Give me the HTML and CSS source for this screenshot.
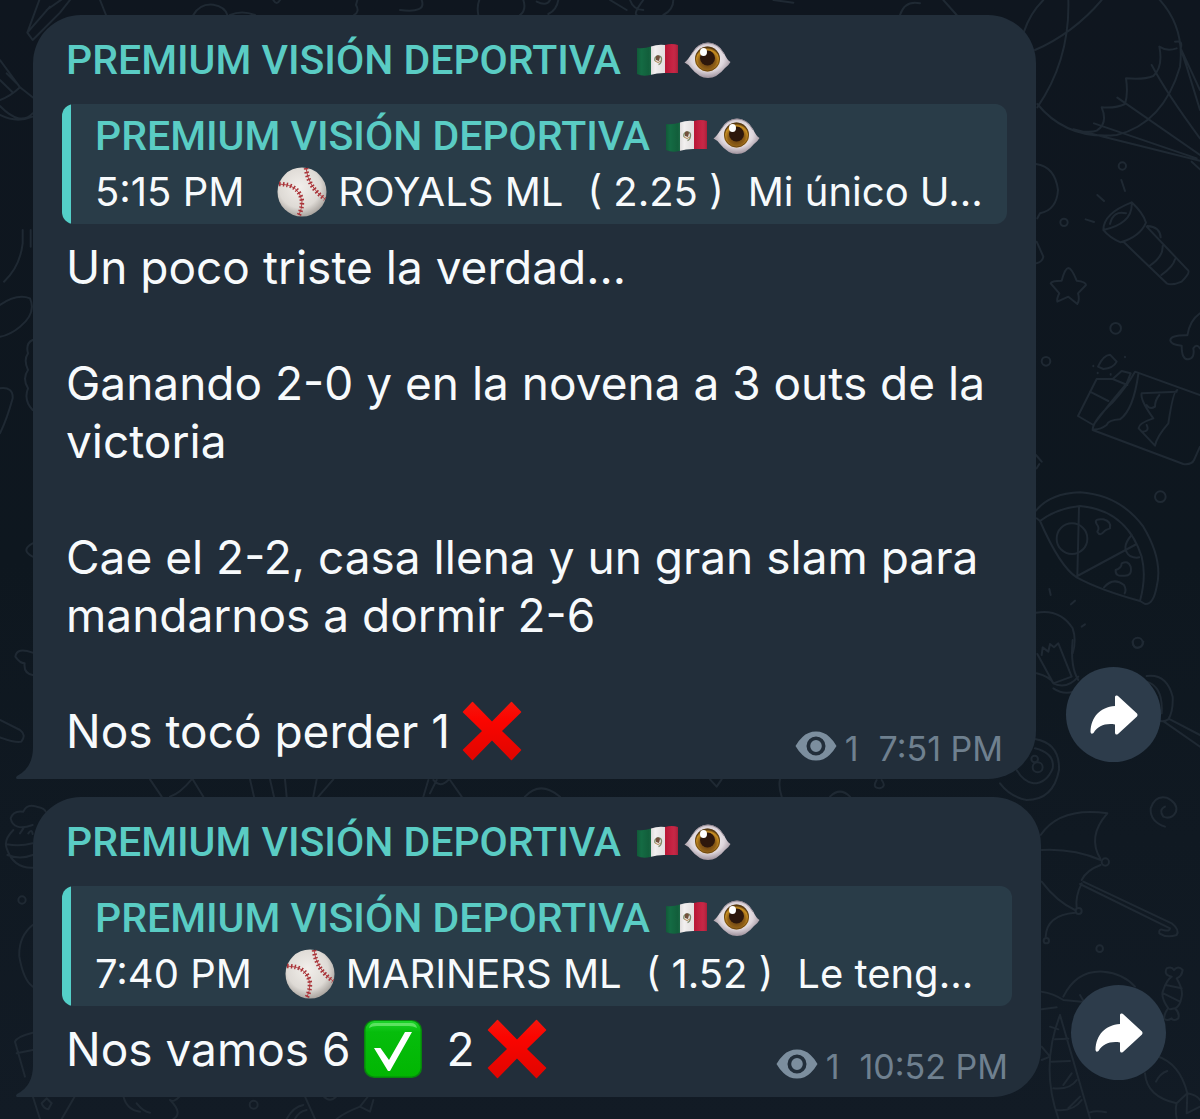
FILE: index.html
```html
<!DOCTYPE html>
<html lang="es">
<head>
<meta charset="utf-8">
<meta name="viewport" content="width=device-width, initial-scale=1">
<title>Premium Visión Deportiva</title>
<link rel="stylesheet" href="styles.css">
</head>
<body>
<svg class="defs" aria-hidden="true">
  <defs>
    <linearGradient id="flag-shade" x1="0" x2="1" y1="0" y2="0">
      <stop offset="0" stop-color="#000" stop-opacity=".2"/><stop offset=".12" stop-color="#000" stop-opacity="0"/>
      <stop offset=".3" stop-color="#000" stop-opacity=".12"/><stop offset=".45" stop-color="#fff" stop-opacity=".1"/>
      <stop offset=".7" stop-color="#000" stop-opacity=".06"/><stop offset=".85" stop-color="#fff" stop-opacity=".05"/><stop offset="1" stop-color="#000" stop-opacity=".2"/>
    </linearGradient>
    <radialGradient id="eye-white" cx=".5" cy=".45" r=".6">
      <stop offset="0" stop-color="#fff"/><stop offset=".6" stop-color="#ded6dc"/><stop offset="1" stop-color="#8d7f8b"/>
    </radialGradient>
    <radialGradient id="eye-iris" cx=".5" cy=".6" r=".55">
      <stop offset="0" stop-color="#5a3411"/><stop offset=".6" stop-color="#8f5f17"/><stop offset=".85" stop-color="#c98f22"/><stop offset="1" stop-color="#5b3c12"/>
    </radialGradient>
    <radialGradient id="ball-skin" cx=".45" cy=".4" r=".6">
      <stop offset="0" stop-color="#f2efeb"/><stop offset=".7" stop-color="#dedad5"/><stop offset="1" stop-color="#aba6a1"/>
    </radialGradient>
    <linearGradient id="cross-red" x1="0" x2="0" y1="0" y2="1">
      <stop offset="0" stop-color="#f5160c"/><stop offset=".3" stop-color="#fb0500"/><stop offset="1" stop-color="#e00500"/>
    </linearGradient>
    <linearGradient id="check-green" x1="0" x2="0" y1="0" y2="1">
      <stop offset="0" stop-color="#1cd42a"/><stop offset=".2" stop-color="#06bd0c"/><stop offset="1" stop-color="#02b602"/>
    </linearGradient>
    <symbol id="flag" viewBox="0 0 43 34">
      <clipPath id="flag-cut"><path d="M1 5Q8 6 15 3.500T29 2Q36 0 42 2V30Q35 30 28 30T14 32Q7 34 1 31Z"/></clipPath>
      <g clip-path="url(#flag-cut)">
        <path fill="#146b43" d="M0 0h15v34H0z"/><path fill="#f1eeee" d="M15 0h14v34H15z"/><path fill="#c5193a" d="M29 0h14v34H29z"/>
        <path fill="url(#flag-shade)" d="M0 0h43v34H0z"/>
      </g>
      <path d="M19 18q-1-4 3-5q4 0 3.500 4q-.5 4-3 4.500" fill="none" stroke="#7c8a68" stroke-width="1.300"/>
      <path d="M20 13q3-2 4 1l-1 4-3-1z" fill="#73503c"/><path d="M19 18q3 3 6 0" fill="none" stroke="#b28a55"/>
    </symbol>
    <symbol id="eye" viewBox="0 0 47 38">
      <path fill="url(#eye-white)" d="M.5 21.500Q4 19 8 12Q14 1.500 24 1.500T40 12Q43 19 46.500 21Q45 24 41 27Q33 37 24 37T7 27Q4 23 .5 21.500Z"/>
      <path fill="none" stroke="#776a76" stroke-opacity=".6" d="M7 14Q14 2 24 2T40 13"/>
      <circle cx="23.500" cy="18" r="12.500" fill="url(#eye-iris)"/>
      <circle cx="23.500" cy="18" r="12" fill="none" stroke="#54360f" stroke-opacity=".7"/>
      <circle cx="23.500" cy="17" r="7.500" fill="#2d170c"/>
      <ellipse cx="19.500" cy="11" rx="3.500" ry="4" fill="#fff"/>
    </symbol>
    <symbol id="ball" viewBox="0 0 50 50">
      <circle cx="25" cy="25" r="24.500" fill="url(#ball-skin)"/>
      <g fill="none" stroke="#b6484a">
        <path stroke-width="1" d="M2 17Q22 17 25 34Q25 42 22 48M29 1Q31 20 48 32"/>
        <path stroke-width="4.500" stroke-dasharray="1.500 2.200" stroke="#a93339" d="M2 17Q22 17 25 34Q25 42 22 48M29 1Q31 20 48 32"/>
      </g>
    </symbol>
    <symbol id="cross" viewBox="0 0 60 60">
      <path fill="url(#cross-red)" d="M1 10.500L10 1Q10.500.5 11 1L30 20.500L49 1Q49.500.5 50 1L59 10.500Q59.500 11 59 11.500L40 30L59 48.500Q59.500 49 59 49.500L50 59Q49.500 59.500 49 59L30 39.500L11 59Q10.500 59.500 10 59L1 49.500Q.5 49 1 48.500L20 30L1 11.500Q.5 11 1 10.500Z"/>
    </symbol>
    <symbol id="check" viewBox="0 0 60 60">
      <rect x="1" y="1" width="58" height="58" rx="10" fill="#07870c"/>
      <rect x="2.500" y="2" width="55" height="55.500" rx="9" fill="url(#check-green)"/>
      <path d="M6 9Q7 4 12 4H48Q53 4 54 9Q50 7 46 7H14Q9 7 6 9Z" fill="#8cf08c" fill-opacity=".6"/>
      <path fill="#fff" d="M11 29H17.500L26 41L42 13H49L27 52H25Z"/>
    </symbol>
    <symbol id="views" viewBox="0 0 42 30">
      <path fill-rule="evenodd" d="M.5 15Q4 9 7.500 6Q13 .5 21 .5T34.500 6Q38 9 41.500 15Q38 21 34.500 24Q29 29.500 21 29.500T7.500 24Q4 21 .5 15ZM21 5.500A9.500 9.500 0 1 0 21 24.500A9.500 9.500 0 1 0 21 5.500ZM21 9A5.800 6 0 1 1 21 21A5.800 6 0 1 1 21 9Z"/>
    </symbol>
    <symbol id="forward" viewBox="0 0 48 40">
      <path d="M25 2Q25 0 27 .5L28 1L47 18.500Q48 20 47 21.500L28 39Q25.500 40.500 25 38V29.500C15 28 8 31 3.500 38Q1 40 .5 37C1 22 10 12 25 11Z"/>
    </symbol>
    <symbol id="tail" viewBox="0 0 34 40">
      <path d="M17 0H34V40H1Q-1 39 1 37Q17 29 17 8Z"/>
    </symbol>
  </defs>
</svg>

<svg class="wallpaper" aria-hidden="true" width="1200" height="1119" viewBox="0 0 1200 1119">
  <g fill="none" stroke-width="6" stroke-linecap="round" stroke-linejoin="round">
    <g transform="scale(.33333)">
      <path d="M118 0L82 98L98 120L180 38L210 0M140 30L225 -30M300 0L318 45M82 98L150 20"/>
      <path d="M0 180L60 262L98 292M0 300Q30 290 60 262M0 318Q60 380 98 340M20 220L50 250M0 345Q50 370 98 350M0 240L36 275"/>
      <path d="M68 690V730Q60 800 12 845M92 690V740M0 915Q50 880 90 895Q110 940 60 980Q30 1005 0 1010M98 1020Q76 1030 84 1060Q70 1080 84 1110Q66 1135 84 1165Q70 1200 98 1230M0 1165Q40 1160 38 1195Q20 1260 0 1300M98 1630Q60 1650 98 1670M98 1958Q50 1940 46 1970Q60 1990 74 1990Q70 2020 98 2025M0 2160L60 2190Q80 2205 64 2225Q50 2230 0 2212"/>
      <path d="M580 45Q600 10 640 14Q675 20 682 45M690 45Q725 30 765 45M820 0Q830 18 840 0M1062 45Q1080 35 1068 15L1072 0M1200 30Q1280 40 1265 0M1435 45Q1430 20 1438 0M1570 0Q1580 30 1560 45M1610 5Q1640 20 1650 0M1675 0Q1670 30 1645 42M1830 0L1880 30M1890 0Q1900 30 1930 30M1930 0Q1900 40 1910 45M2020 0Q2020 30 1990 45M2320 0L2380 8M2700 45Q2715 0 2760 10M2830 0L2870 45"/>
    </g>
    <g transform="translate(1000 0) scale(.33333)">
      <path d="M72 95Q90 40 130 0M205 0Q210 180 112 322M305 0Q220 100 105 150M112 312Q200 420 350 405Q490 370 540 200Q555 80 475 -5M525 125Q550 120 542 145L600 270M542 145L560 200L600 330M478 140Q500 155 530 145M478 140Q490 200 460 228Q430 240 378 235Q385 280 375 312Q350 325 305 322Q325 370 290 392Q270 400 220 390M455 195Q500 280 600 415M352 293L600 465M282 370L590 475M220 388L600 482M575 485L600 508"/>
      <circle cx="367" cy="498" r="11"/><circle cx="192" cy="667" r="11"/>
      <path d="M364 540L375 573M292 585L312 603M257 658L282 666M108 492Q165 500 174 570Q170 630 120 640L112 655M110 725L130 770Q128 785 110 790"/>
      <path d="M310 690Q310 640 395 607Q430 640 438 668Q420 710 362 727Q330 715 310 690ZM310 690Q400 670 395 607M330 672Q340 630 378 640M372 727L500 850Q515 858 545 845Q570 820 565 812L440 680M448 798Q490 770 488 738M484 825Q520 800 525 778M442 678Q480 680 482 712"/>
      <path d="M205 804Q215 804 230 842Q258 845 258 855L234 880Q240 900 232 912L205 890L172 905Q170 895 178 880L152 850Q155 842 185 842Q195 805 205 804Z"/>
    </g>
    <g transform="translate(1000 300) scale(.33333)">
      <circle cx="347" cy="85" r="16"/><circle cx="138" cy="184" r="13"/><circle cx="481" cy="590" r="16"/><circle cx="413" cy="1028" r="15"/>
      <path d="M600 40Q570 60 562 106Q510 105 511 122Q515 135 545 137Q545 180 565 178Q585 175 580 145Q590 130 600 145"/>
      <path d="M294 200Q310 165 330 164L350 185Q340 205 310 207ZM375 170V172M280 197V199M293 218V220M332 222V224"/>
      <path d="M290 237L234 348L280 375L330 310L380 250L392 220L365 213L338 237ZM270 275L325 303M338 237L382 255M415 222Q400 330 360 358Q325 360 320 375Q300 390 278 388Q280 360 340 305Q380 260 405 215L600 285M278 390L550 492Q575 495 582 480L600 440M425 280L530 275M425 280Q420 300 460 355Q415 370 416 385L465 437Q470 410 505 370Q520 270 532 270M440 315Q450 330 465 320Q465 300 478 285M425 395Q450 395 440 375M108 465L125 485M110 505L118 492"/>
      <path d="M108 632Q150 580 240 577Q360 585 430 680Q490 780 470 860Q460 915 435 912L420 903Q440 830 425 770Q380 630 240 618Q170 625 120 663L110 655M120 663Q180 800 230 832Q300 870 420 903M237 622L232 828L410 732"/>
      <circle cx="216" cy="716" r="46"/>
      <path d="M395 705Q360 745 390 768Q405 775 418 772M312 862Q340 830 372 855Q380 870 374 880M290 672Q280 655 310 658Q335 665 330 685Q315 690 312 695Q300 710 292 695Q300 685 290 672ZM365 790Q385 780 392 800Q398 830 370 827Q345 830 347 810Q365 805 365 790ZM148 867L152 885M225 902L213 913M255 973L245 980M108 938Q180 925 218 985Q230 1020 218 1060"/>
    </g>
    <g transform="translate(1000 640) scale(.33333)">
      <path d="M218 0Q210 80 235 120M112 42L160 130L215 110L175 10L162 22L150 12L145 35L128 22L125 45M110 100Q150 110 160 130M160 130Q200 150 235 110M160 145Q190 165 220 155M398 5Q400 25 413 23Q428 22 430 5"/>
      <path d="M440 108Q500 100 518 170Q520 215 505 238Q490 248 470 240M440 125Q490 140 485 220M492 245L600 320M510 238L600 285"/>
      <path d="M105 297Q180 310 177 390Q160 480 80 480Q30 470 0 430M105 325Q165 340 158 385Q140 430 100 430Q70 425 50 390"/>
      <circle cx="104" cy="357" r="10"/><circle cx="113" cy="382" r="15"/>
      <path d="M495 560Q450 545 452 505Q465 465 500 473Q535 490 528 515Q515 540 490 530Q475 510 495 500"/>
      <path d="M122 585Q180 500 322 520Q260 590 302 658M125 630Q220 625 302 660M302 675Q260 690 245 720"/><circle cx="316" cy="666" r="11"/>
    </g>
    <g transform="translate(1000 880) scale(.33333)">
      <path d="M125 5Q170 65 225 90M245 10Q225 50 230 85M225 98Q140 105 137 170M250 5L515 130Q540 150 530 165Q500 175 478 160Q475 145 490 150Q510 155 510 145L240 12"/><circle cx="236" cy="93" r="9"/><circle cx="139" cy="182" r="8"/><circle cx="299" cy="206" r="10"/>
      <path d="M190 350Q230 270 310 275Q370 280 405 320M125 335Q160 340 190 360L245 365M125 388L170 382M180 405Q120 560 175 715M180 405L270 715M165 478L205 476M155 545L210 543M160 625Q210 630 230 600M170 690Q220 695 245 660M190 615L215 580M205 685L240 650M125 500L150 530L125 540M150 440L175 448M240 345L250 362M270 697Q290 690 318 697"/>
      <path d="M515 290Q490 285 500 265Q515 258 522 270Q535 255 548 270Q545 290 530 295Q550 330 545 350Q540 380 525 385Q540 400 535 415Q520 425 515 415Q500 425 492 415Q495 395 505 385Q480 350 490 330Q500 300 515 290ZM497 315L545 325M490 340L540 365M510 388L525 385"/>
      <path d="M435 580Q440 650 530 670Q525 690 530 715M470 528Q540 550 562 640Q590 645 600 660M562 640L560 700L600 680M468 605Q480 580 502 573M530 670L562 640"/>
    </g>
    <g transform="translate(0 740) scale(.33333)">
      <path d="M98 282Q95 265 85 280M70 265L60 280M98 255Q40 275 32 235Q40 210 70 215Q80 190 110 200Q135 205 137 215M40 270Q10 300 20 325Q40 385 98 383M20 313Q60 320 98 310M22 345Q60 360 98 345M98 555Q55 590 58 650Q70 720 98 740M98 878Q50 890 45 905L75 1010M50 940L98 930M98 1068L120 1137M225 1068L185 1137M140 1075L155 1090L145 1108Q130 1105 125 1090Z"/>
      <circle cx="66" cy="480" r="11"/><circle cx="761" cy="1094" r="12"/>
      <path d="M450 118L485 170M575 118Q540 160 510 170M578 118L610 170M750 118L762 170M810 118L822 170M855 118L860 170M950 118L940 170M1000 118L955 170M370 1068Q380 1110 420 1115M410 1090Q430 1115 450 1118M540 1068Q520 1090 510 1080Q550 1120 520 1137M860 1137Q880 1100 910 1095M885 1137Q895 1115 920 1110M915 1070L945 1137M970 1068Q990 1090 1010 1068M1105 1068L1080 1100L1110 1115L1120 1080M1080 1100Q1030 1120 1010 1137"/>
      <path d="M1270 170L1285 120M1385 170L1350 120M1300 120Q1320 145 1345 120M1290 160L1310 120M1575 170Q1620 120 1680 170M2130 118L2150 140L2165 118M2340 118Q2335 140 2345 170M2490 170Q2520 140 2550 170M2630 120Q2615 145 2640 145Q2660 140 2645 120"/>
    </g>
  </g>
</svg>

<main class="chat">
  <article class="row">
    <div class="bubble">
      <svg class="tail" aria-hidden="true"><use href="#tail"/></svg>
      <h2 class="name">PREMIUM VISIÓN DEPORTIVA<svg class="flag" role="img" aria-label="México"><use href="#flag"/></svg><svg class="eye" role="img" aria-label="Ojo"><use href="#eye"/></svg></h2>
      <blockquote class="quote">
        <h3 class="name">PREMIUM VISIÓN DEPORTIVA<svg class="flag" role="img" aria-label="México"><use href="#flag"/></svg><svg class="eye" role="img" aria-label="Ojo"><use href="#eye"/></svg></h3>
        <p class="preview"><span>5:15 PM</span><svg class="ball" role="img" aria-label="Béisbol"><use href="#ball"/></svg><span class="team">ROYALS ML</span><span class="odds">( 2.25 )</span><span>Mi único U...</span></p>
      </blockquote>
      <div class="text">
        <p>Un poco triste la verdad...</p>
        <p>Ganando 2-0 y en la novena a 3 outs de la<br>victoria</p>
        <p>Cae el 2-2, casa llena y un gran slam para<br>mandarnos a dormir 2-6</p>
      </div>
      <div class="last">
        <p class="result">Nos tocó perder 1<svg class="mark" role="img" aria-label="Perdido"><use href="#cross"/></svg></p>
        <div class="meta"><svg class="views" role="img" aria-label="Vistas"><use href="#views"/></svg><span>1</span><time>7:51 PM</time></div>
      </div>
    </div>
    <button class="forward" type="button" aria-label="Reenviar"><svg aria-hidden="true"><use href="#forward"/></svg></button>
  </article>

  <article class="row row-wide">
    <div class="bubble">
      <svg class="tail" aria-hidden="true"><use href="#tail"/></svg>
      <h2 class="name">PREMIUM VISIÓN DEPORTIVA<svg class="flag" role="img" aria-label="México"><use href="#flag"/></svg><svg class="eye" role="img" aria-label="Ojo"><use href="#eye"/></svg></h2>
      <blockquote class="quote">
        <h3 class="name">PREMIUM VISIÓN DEPORTIVA<svg class="flag" role="img" aria-label="México"><use href="#flag"/></svg><svg class="eye" role="img" aria-label="Ojo"><use href="#eye"/></svg></h3>
        <p class="preview"><span>7:40 PM</span><svg class="ball" role="img" aria-label="Béisbol"><use href="#ball"/></svg><span class="team">MARINERS ML</span><span class="odds">( 1.52 )</span><span>Le teng...</span></p>
      </blockquote>
      <div class="last">
        <p class="result">Nos vamos 6<svg class="mark" role="img" aria-label="Ganados"><use href="#check"/></svg><span class="losses">2</span><svg class="mark" role="img" aria-label="Perdidos"><use href="#cross"/></svg></p>
        <div class="meta"><svg class="views" role="img" aria-label="Vistas"><use href="#views"/></svg><span>1</span><time>10:52 PM</time></div>
      </div>
    </div>
    <button class="forward" type="button" aria-label="Reenviar"><svg aria-hidden="true"><use href="#forward"/></svg></button>
  </article>
</main>
</body>
</html>
```
FILE: styles.css
```css
* {
  box-sizing: border-box;
}

body {
  margin: 0;
  position: relative;
  min-height: 100vh;
  overflow-x: hidden;
  background: linear-gradient(#0f161f, #0e171f 50%, #121b25);
  color: #f7fafc;
  font-family: Inter, "Noto Sans", sans-serif;
}

h2,
h3,
p,
blockquote {
  margin: 0;
}

svg {
  display: block;
  flex: none;
}

.defs {
  position: absolute;
  width: 0;
  height: 0;
}

.wallpaper {
  position: absolute;
  top: 0;
  left: 0;
  z-index: -1;
  stroke: #1f2933;
}

.chat {
  display: flex;
  flex-direction: column;
  gap: 18px;
  padding: 15px 0 22px 33px;
}

.row {
  display: flex;
  align-items: flex-end;
  gap: 30px;
  padding-right: 39px;
}

.row-wide {
  padding-right: 34px;
}

.bubble {
  position: relative;
  flex: 1;
  min-width: 0;
  padding: 16px 29px 10px;
  border-radius: 48px 48px 48px 0;
  background: #222e3a;
}

.tail {
  position: absolute;
  left: -17px;
  bottom: 0;
  width: 34px;
  height: 40px;
  fill: #222e3a;
}

.name {
  display: flex;
  align-items: center;
  padding-left: 4px;
  color: #5accc4;
  font: 500 41px/58px Roboto, sans-serif;
  white-space: nowrap;
}

.flag {
  width: 43px;
  height: 34px;
  margin-left: 15px;
}

.eye {
  width: 47px;
  height: 38px;
  margin-left: 5px;
}

.quote {
  margin: 15px 0 14px;
  padding: 4px 20px 4px 33px;
  border-radius: 12px;
  background: linear-gradient(to right, #54cfc8 9px, #293c48 9px);
}

.quote .name {
  padding: 0;
  line-height: 56px;
}

.preview {
  display: flex;
  align-items: center;
  font-size: 40px;
  line-height: 56px;
  white-space: nowrap;
}

.ball {
  width: 50px;
  height: 50px;
  margin: 0 11px 0 33px;
}

.odds {
  margin: 0 24px;
}

.text,
.result {
  padding-left: 4px;
  font-size: 46px;
  line-height: 58px;
}

.text p {
  margin-bottom: 58px;
}

.last {
  display: flex;
  align-items: flex-end;
  justify-content: space-between;
  padding-right: 4px;
}

.result {
  display: flex;
  align-items: center;
  padding-bottom: 9px;
  white-space: nowrap;
}

.mark {
  width: 60px;
  height: 60px;
  margin: -1px 0 -1px 12px;
}

.losses {
  margin-left: 24px;
}

.meta {
  display: flex;
  align-items: center;
  color: #6f808f;
  font-size: 34px;
  line-height: 40px;
}

.meta time {
  margin-left: 20px;
}

.views {
  width: 42px;
  height: 30px;
  margin: 0 8px 6px 0;
  fill: #7c8e9e;
}

.forward {
  display: flex;
  flex: none;
  align-items: center;
  justify-content: center;
  width: 95px;
  height: 95px;
  margin-bottom: 17px;
  padding: 0;
  border: 0;
  border-radius: 50%;
  background: #2d3c4b;
}

.forward svg {
  width: 48px;
  height: 40px;
  fill: #fff;
}
```
